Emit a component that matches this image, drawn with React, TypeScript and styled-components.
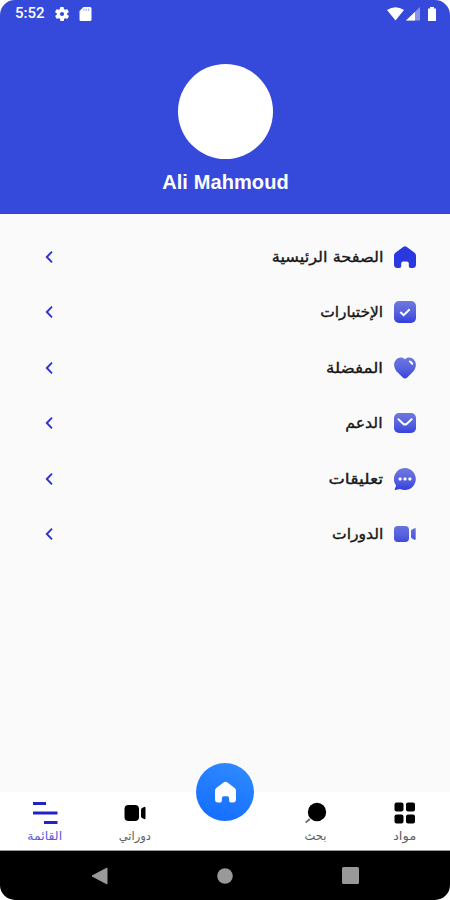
import React from 'react';
import styled, { createGlobalStyle } from 'styled-components';

const Global = createGlobalStyle`
  * { box-sizing: border-box; }
  body { margin: 0; background: #fff; }
`;

const Phone = styled.div`
  width: 450px;
  height: 900px;
  border-radius: 15px;
  overflow: hidden;
  display: flex;
  flex-direction: column;
  background: #fafafa;
  font-family: 'DejaVu Sans', sans-serif;
`;

const Header = styled.header`
  height: 214px;
  flex: none;
  background: #354adb;
  border-bottom: 1px solid #3546cc;
  display: flex;
  flex-direction: column;
  align-items: center;
`;

const StatusBar = styled.div`
  width: 100%;
  height: 27px;
  padding: 0 14px 0 15px;
  display: flex;
  align-items: center;
  justify-content: space-between;
`;

const StatusGroup = styled.div<{ $gap: number }>`
  display: flex;
  align-items: center;
  gap: ${(p) => p.$gap}px;
  svg { display: block; }
`;

const Clock = styled.span`
  font: 500 15px/27px Roboto, sans-serif;
  color: #fff;
  width: 30px;
  white-space: nowrap;
`;

const Avatar = styled.div`
  width: 95px;
  height: 95px;
  margin-top: 37px;
  border-radius: 50%;
  background: #fff;
`;

const UserName = styled.h1`
  margin: 11px 0 0;
  padding-left: 1px;
  font: bold 20px/24px 'Liberation Sans', sans-serif;
  color: #fff;
  letter-spacing: 0.1px;
`;

const Menu = styled.main`
  flex: 1;
  padding: 15.4px 34px 0 44px;
`;

const MenuRow = styled.div`
  height: 55.4px;
  display: flex;
  align-items: center;
  svg { display: block; flex: none; }
`;

const MenuLabel = styled.span<{ $scale: number }>`
  margin-left: auto;
  margin-right: 11px;
  direction: rtl;
  white-space: nowrap;
  font-size: 15px;
  line-height: 24px;
  color: #161616;
  -webkit-text-stroke: 0.35px #161616;
  transform: scaleX(${(p) => p.$scale});
  transform-origin: right center;
`;

const TabBar = styled.nav`
  height: 59px;
  flex: none;
  background: #fff;
  border-bottom: 1px solid #999;
  display: grid;
  grid-template-columns: repeat(5, 90px);
`;

const Tab = styled.div`
  display: flex;
  flex-direction: column;
  align-items: center;
  padding-top: 8px;
  svg { display: block; }
`;

const TabLabel = styled.span<{ $scale: number; $active?: boolean }>`
  direction: rtl;
  white-space: nowrap;
  font-size: 12px;
  line-height: 18px;
  margin-top: 1px;
  color: ${(p) => (p.$active ? '#6058da' : '#606060')};
  transform: scaleX(${(p) => p.$scale});
`;

const HomeButton = styled.div`
  width: 58px;
  height: 58px;
  margin: -29px auto 0;
  border-radius: 50%;
  background: linear-gradient(200deg, #318cff, #126bff);
  display: grid;
  place-items: center;
  position: relative;
`;

const SystemBar = styled.footer`
  height: 49px;
  flex: none;
  background: #000;
  display: flex;
  align-items: center;
  justify-content: space-between;
  padding: 0 91px 0 90px;
  svg { display: block; }
`;

const housePath =
  'M9.2 .9Q11-.5 12.8 .9L20.6 6.8Q22 8 22 9.8V18.6Q22 22 18.8 22H16.6Q14.8 22 14.8 20V17.5Q14.8 15.4 12.8 15.4H9.2Q7.2 15.4 7.2 17.5V20Q7.2 22 5.4 22H3.2Q0 22 0 18.6V9.8Q0 8 1.4 6.8Z';

type IconName = 'home' | 'tests' | 'heart' | 'mail' | 'chat' | 'video';

const drawings: Record<IconName, React.ReactNode> = {
  home: <path d={housePath} fill="#2938df" />,
  tests: (
    <>
      <rect width="22" height="22" rx="5" fill="url(#ink)" />
      <path d="m6.300 11 3.400 3.200 6-6" fill="none" stroke="#fff" strokeWidth="2" />
    </>
  ),
  heart: (
    <>
      <path d="M11 2.300C8.500 0 4.700 0 2 2.700-1 6-.1 11 2.700 14.400L8.800 20.400Q11 22.400 13.200 20.400L19.300 14.400C22.100 11 23 6 20 2.700 17.300 0 13.500 0 11 2.300Z" fill="url(#ink)" />
      <path d="M15.400 4.200Q18.200 4.700 18.500 7.400L16.800 6Z" fill="#fff" stroke="#fff" strokeWidth="1.200" strokeLinejoin="round" />
    </>
  ),
  mail: (
    <>
      <rect y="1" width="22" height="20" rx="5" fill="url(#ink)" />
      <path d="m4.400 7.300 5 4.600Q11 13.200 12.600 11.900L17.600 7.300" fill="none" stroke="#fff" strokeWidth="2" strokeLinecap="round" />
    </>
  ),
  chat: (
    <>
      <path d="M11 0A11 11 0 1 1 6 20.900L1.400 22Q.3 22 1 20.400L2.100 17.500A11 11 0 0 1 11 0Z" fill="url(#ink)" />
      <g fill="#fff">
        <rect x="4.600" y="9.500" width="3" height="3" rx="1" />
        <rect x="9.500" y="9.500" width="3" height="3" rx="1" />
        <rect x="14.400" y="9.500" width="3" height="3" rx="1" />
      </g>
    </>
  ),
  video: (
    <>
      <rect y="3" width="15" height="16" rx="3.700" fill="url(#ink)" />
      <path d="M17 8Q17 7 18 6.600L20.500 5.200Q21.700 4.800 21.700 6.200V15.800Q21.700 17.200 20.500 16.800L18 15.400Q17 15 17 14Z" fill="url(#ink)" />
    </>
  ),
};

const MenuIcon = ({ name }: { name: IconName }) => (
  <svg width="22" height="22" viewBox="0 0 22 22">{drawings[name]}</svg>
);

const HiddenDefs = styled.svg`
  position: absolute;
`;

const Gradients = () => (
  <HiddenDefs width="0" height="0">
    <linearGradient id="ink" x1="0" y1="0" x2="0" y2="22" gradientUnits="userSpaceOnUse">
      <stop offset="0" stopColor="#6f78df" />
      <stop offset="0.6" stopColor="#535edd" />
      <stop offset="1" stopColor="#343ee0" />
    </linearGradient>
  </HiddenDefs>
);

const Chevron = () => (
  <svg width="11" height="14" viewBox="0 0 11 14">
    <path d="M8 1.700 2.800 7 8 12.300" fill="none" stroke="#3030d2" strokeWidth="1.900" />
  </svg>
);

const items: { label: string; icon: IconName; scale: number }[] = [
  { label: 'الصفحة الرئيسية', icon: 'home', scale: 1.08 },
  { label: 'الإختبارات', icon: 'tests', scale: 1.03 },
  { label: 'المفضلة', icon: 'heart', scale: 1.12 },
  { label: 'الدعم', icon: 'mail', scale: 1.05 },
  { label: 'تعليقات', icon: 'chat', scale: 1.16 },
  { label: 'الدورات', icon: 'video', scale: 1.04 },
];

export default function App() {
  return (
    <>
      <Global />
      <Phone>
        <Gradients />
        <Header>
          <StatusBar>
            <StatusGroup $gap={10}>
              <Clock>5:52</Clock>
              <svg width="14" height="14" viewBox="2 2 20 20" fill="#fff">
                <path d="M19.400 13a7.800 7.800 0 0 0 0-2l2.100-1.600a.5.5 0 0 0 .1-.6l-2-3.500a.5.5 0 0 0-.6-.2l-2.500 1a7.300 7.300 0 0 0-1.700-1l-.4-2.700a.5.5 0 0 0-.5-.4h-4a.5.5 0 0 0-.5.4l-.4 2.700a7.300 7.300 0 0 0-1.700 1l-2.500-1a.5.5 0 0 0-.6.2l-2 3.500a.5.5 0 0 0 .1.6L4.600 11a7.800 7.800 0 0 0 0 2l-2.100 1.600a.5.5 0 0 0-.1.6l2 3.500c.1.2.4.3.6.2l2.500-1c.5.4 1.100.7 1.700 1l.4 2.700c0 .2.2.4.5.4h4c.2 0 .5-.2.5-.4l.4-2.700c.6-.3 1.200-.6 1.700-1l2.500 1c.2.1.5 0 .6-.2l2-3.500a.5.5 0 0 0-.1-.6ZM12 15a3 3 0 1 1 0-6 3 3 0 0 1 0 6Z" />
              </svg>
              <svg width="13" height="14" viewBox="0 0 13 14">
                <path d="M4.500 0h6.500Q12.500 0 12.500 1.500v11Q12.500 14 11 14h-9Q.5 14 .5 12.500V4Z" fill="#fff" />
                <path d="M5 1.500v2.500M7.300 1.500v2.500M9.600 1.500v2.500" stroke="#a6aeea" />
              </svg>
            </StatusGroup>
            <StatusGroup $gap={2}>
              <svg width="17" height="14" viewBox="0 0 17 14">
                <path d="M0 3Q8.500-2.500 17 3L8.500 13.500Z" fill="#fff" />
              </svg>
              <svg width="14" height="14" viewBox="0 0 14 14">
                <path d="M14 0V13.500H0Z" fill="#8994e9" />
                <path d="M9 5V13.500H0Z" fill="#fff" />
              </svg>
              <svg width="14" height="14" viewBox="0 0 14 14">
                <path d="M8 0h4v1.500h2V14h-8V1.500h2Z" fill="#fff" />
              </svg>
            </StatusGroup>
          </StatusBar>
          <Avatar />
          <UserName>Ali Mahmoud</UserName>
        </Header>
        <Menu>
          {items.map((item) => (
            <MenuRow key={item.icon}>
              <Chevron />
              <MenuLabel $scale={item.scale}>{item.label}</MenuLabel>
              <MenuIcon name={item.icon} />
            </MenuRow>
          ))}
        </Menu>
        <TabBar>
          <Tab>
            <svg width="26" height="26" viewBox="0 0 26 26">
              <path d="M1 3.500h13M1 13h24.500M12 22.500h13.500" stroke="#2222c9" strokeWidth="2.800" />
            </svg>
            <TabLabel $scale={1.04} $active>القائمة</TabLabel>
          </Tab>
          <Tab>
            <svg width="26" height="26" viewBox="0 0 26 26">
              <rect x="2.500" y="5" width="14.500" height="16" rx="4" />
              <path d="M19 10Q19 8.500 20 8L22.200 6.900Q23.500 6.500 23.500 8V18Q23.500 19.500 22.200 19.100L20 18Q19 17.500 19 16Z" />
            </svg>
            <TabLabel $scale={0.96}>دوراتي</TabLabel>
          </Tab>
          <HomeButton>
            <svg width="21" height="22" viewBox="0 0 22 22">
              <path d={housePath} fill="#fff" />
            </svg>
          </HomeButton>
          <Tab>
            <svg width="26" height="26" viewBox="0 0 26 26">
              <circle cx="15" cy="12" r="9.200" />
              <path d="m3.600 22.600 4.200-3.600" stroke="#666" strokeWidth="1.700" />
            </svg>
            <TabLabel $scale={0.96}>بحث</TabLabel>
          </Tab>
          <Tab>
            <svg width="26" height="26" viewBox="0 0 26 26">
              <rect x="2.500" y="2.500" width="9" height="9" rx="2" />
              <rect x="14" y="2.500" width="9" height="9" rx="2" />
              <rect x="2.500" y="14.500" width="9" height="9" rx="2" />
              <rect x="14" y="14.500" width="9" height="9" rx="2" />
            </svg>
            <TabLabel $scale={1.1}>مواد</TabLabel>
          </Tab>
        </TabBar>
        <SystemBar>
          <svg width="18" height="18" viewBox="0 0 18 18">
            <path d="M2 9 17 1v16Z" fill="#999" stroke="#999" strokeLinejoin="round" />
          </svg>
          <svg width="16" height="16" viewBox="0 0 16 16">
            <circle cx="8" cy="8" r="7.800" fill="#999" />
          </svg>
          <svg width="17" height="17" viewBox="0 0 17 17">
            <rect width="17" height="17" rx="1.500" fill="#999" />
          </svg>
        </SystemBar>
      </Phone>
    </>
  );
}
